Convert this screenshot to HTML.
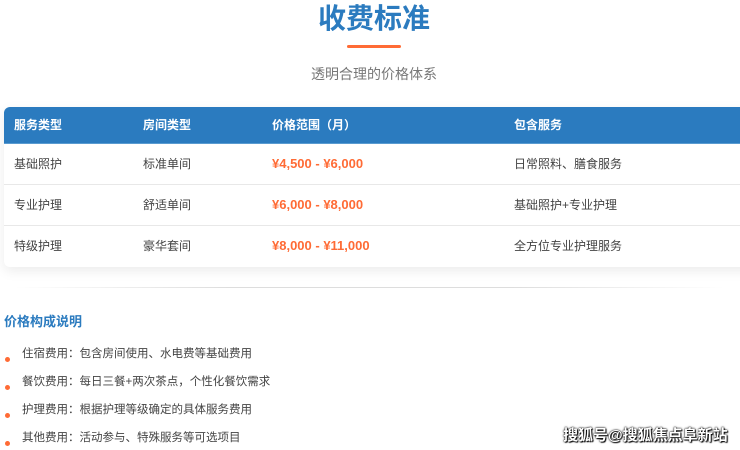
<!DOCTYPE html>
<html><head><meta charset="utf-8"><style>
*{margin:0;padding:0;box-sizing:border-box}
body{width:740px;height:450px;overflow:hidden;background:#fff;font-family:"Liberation Sans","Noto Sans CJK SC",sans-serif;position:relative;color:#444}
.t{position:absolute;left:0;width:748px;text-align:center;top:-3px;font-size:28px;font-weight:bold;color:#2b7bbf;letter-spacing:0px}
.bar{position:absolute;left:347px;top:45px;width:54px;height:3px;background:#ff6b35;border-radius:2px}
.sub{position:absolute;left:0;width:748px;text-align:center;top:64px;font-size:14px;color:#777}
.tbl{position:absolute;left:4px;top:107px;width:760px;height:160px;background:#fff;border-radius:6px;overflow:hidden;box-shadow:0 4px 12px rgba(0,0,0,.08)}
.hd{height:37px;background:#2b7bbf;color:#fff;font-weight:bold;font-size:12px;position:relative;border-bottom:1px solid #5a9bd0}
.row{height:41px;position:relative;font-size:12px;color:#444;border-bottom:1px solid #e8e8e8}
.row:last-child{border-bottom:none}
.c{position:absolute;top:0;line-height:37px}
.row .c{line-height:40px}
.c1{left:10px}.c2{left:139px}.c3{left:268px}.c4{left:510px}
.p{color:#ff6b35;font-weight:bold;font-size:13px}
.div{position:absolute;left:15px;right:15px;top:287px;height:1px;background:linear-gradient(90deg,rgba(220,220,220,0),#ddd 30%,#ddd 70%,rgba(220,220,220,0))}
.h2{position:absolute;left:4px;top:311px;font-size:13px;font-weight:bold;color:#2b7bbf}
.li{position:absolute;left:22px;font-size:11.5px;color:#444}
.li:before{content:"";position:absolute;left:-17px;top:12px;width:5px;height:5px;border-radius:50%;background:#ff6b35}
.wm{position:absolute;left:563px;top:424px;font-size:15px;font-weight:bold;color:#fff;text-shadow:0 0 2px #000,0 0 1px #000,1px 1px 1px #000}
</style></head><body>
<div class="t">收费标准</div>
<div class="bar"></div>
<div class="sub">透明合理的价格体系</div>
<div class="tbl">
<div class="hd"><span class="c c1">服务类型</span><span class="c c2">房间类型</span><span class="c c3">价格范围（月）</span><span class="c c4">包含服务</span></div>
<div class="row"><span class="c c1">基础照护</span><span class="c c2">标准单间</span><span class="c c3 p">¥4,500 - ¥6,000</span><span class="c c4">日常照料、膳食服务</span></div>
<div class="row"><span class="c c1">专业护理</span><span class="c c2">舒适单间</span><span class="c c3 p">¥6,000 - ¥8,000</span><span class="c c4">基础照护+专业护理</span></div>
<div class="row"><span class="c c1">特级护理</span><span class="c c2">豪华套间</span><span class="c c3 p">¥8,000 - ¥11,000</span><span class="c c4">全方位专业护理服务</span></div>
</div>
<div class="div"></div>
<div class="h2">价格构成说明</div>
<div class="li" style="top:345px">住宿费用：包含房间使用、水电费等基础费用</div>
<div class="li" style="top:373px">餐饮费用：每日三餐+两次茶点，个性化餐饮需求</div>
<div class="li" style="top:401px">护理费用：根据护理等级确定的具体服务费用</div>
<div class="li" style="top:429px">其他费用：活动参与、特殊服务等可选项目</div>
<div class="wm">搜狐号@搜狐焦点阜新站</div>
</body></html>
